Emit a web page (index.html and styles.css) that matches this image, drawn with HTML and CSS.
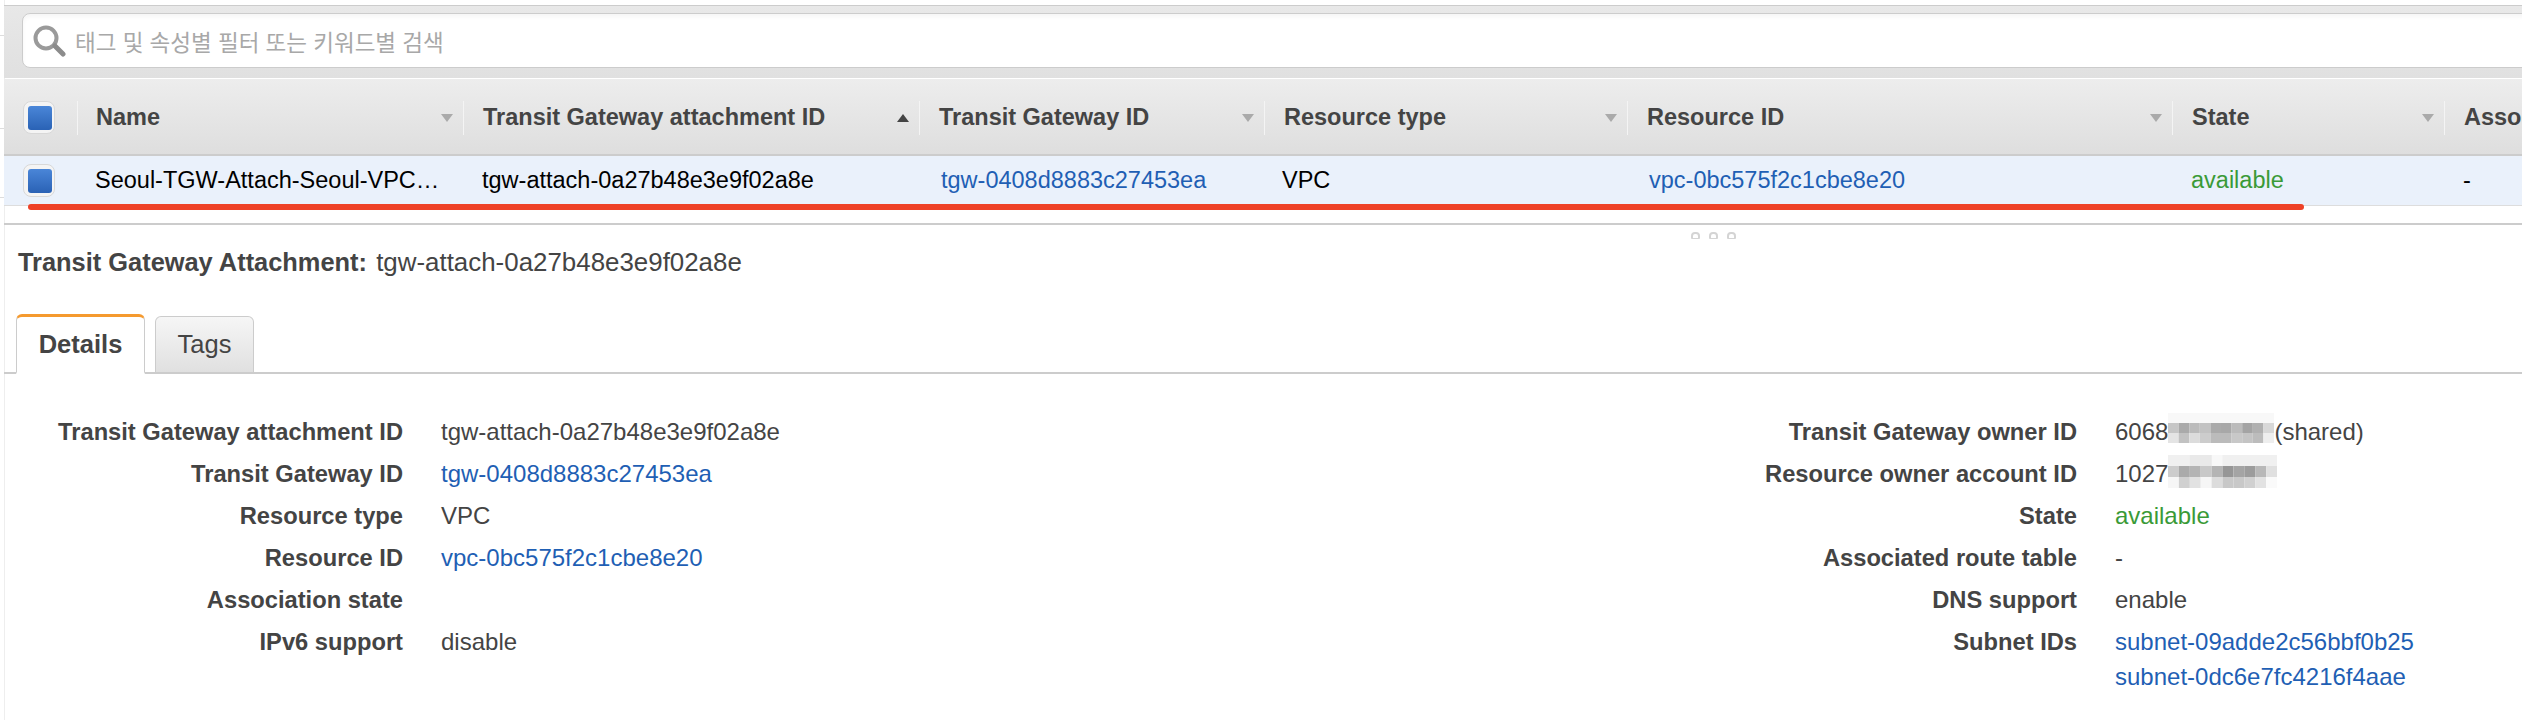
FILE: index.html
```html
<!DOCTYPE html>
<html>
	<head>
		<meta charset="UTF-8">
		<title>Transit Gateway Attachments</title>
		<link rel="stylesheet" href="styles.css">
	</head>
	<body>
		<div class="page">
			<div class="toolbar">
				<div class="search">
					<svg class="search-icon" width="34" height="32" viewBox="0 0 34 32">
						<circle cx="13" cy="13" r="10.5" fill="none" stroke="#9a9a9a" stroke-width="4"/>
						<path d="M22 21 L30 29" stroke="#8c8c8c" stroke-width="5" stroke-linecap="round"/>
					</svg>
					<span class="placeholder">태그 및 속성별 필터 또는 키워드별 검색</span>
				</div>
			</div>
			<div class="grid head">
				<div class="th check-cell"><span class="check"></span></div>
				<div class="th"><span>Name</span><i class="arrow"></i></div>
				<div class="th"><span>Transit Gateway attachment ID</span><i class="arrow up"></i></div>
				<div class="th"><span>Transit Gateway ID</span><i class="arrow"></i></div>
				<div class="th"><span>Resource type</span><i class="arrow"></i></div>
				<div class="th"><span>Resource ID</span><i class="arrow"></i></div>
				<div class="th"><span>State</span><i class="arrow"></i></div>
				<div class="th"><span>Association state</span></div>
			</div>
			<div class="grid row">
				<div class="td check-cell"><span class="check"></span></div>
				<div class="td">Seoul-TGW-Attach-Seoul-VPC…</div>
				<div class="td wide">tgw-attach-0a27b48e3e9f02a8e</div>
				<div class="td"><a>tgw-0408d8883c27453ea</a></div>
				<div class="td">VPC</div>
				<div class="td"><a>vpc-0bc575f2c1cbe8e20</a></div>
				<div class="td wide"><span class="ok">available</span></div>
				<div class="td wide">-</div>
			</div>
			<div class="marker"></div>
			<div class="splitter"><i></i><i></i><i></i></div>
			<h2 class="title"><b>Transit Gateway Attachment:</b> tgw-attach-0a27b48e3e9f02a8e</h2>
			<div class="tabs">
				<div class="tab active">Details</div>
				<div class="tab">Tags</div>
			</div>
			<div class="details">
				<dl class="props left">
					<dt>Transit Gateway attachment ID</dt><dd>tgw-attach-0a27b48e3e9f02a8e</dd>
					<dt>Transit Gateway ID</dt><dd><a>tgw-0408d8883c27453ea</a></dd>
					<dt>Resource type</dt><dd>VPC</dd>
					<dt>Resource ID</dt><dd><a>vpc-0bc575f2c1cbe8e20</a></dd>
					<dt>Association state</dt><dd></dd>
					<dt>IPv6 support</dt><dd>disable</dd>
				</dl>
				<dl class="props right">
					<dt>Transit Gateway owner ID</dt>
					<dd class="masked">6068<svg class="mosaic first" width="106" height="30" viewBox="0 0 100 30" preserveAspectRatio="none">
						<rect x="0" y="0" width="100" height="10" fill="#f8f8f8"/>
						<rect x="0" y="10" width="10" height="10" fill="#c6c6c6"/>
						<rect x="10" y="10" width="10" height="10" fill="#aaaaaa"/>
						<rect x="20" y="10" width="10" height="10" fill="#bbbbbb"/>
						<rect x="30" y="10" width="10" height="10" fill="#c2c2c2"/>
						<rect x="40" y="10" width="10" height="10" fill="#aaaaaa"/>
						<rect x="50" y="10" width="10" height="10" fill="#a8a8a8"/>
						<rect x="60" y="10" width="10" height="10" fill="#bbbbbb"/>
						<rect x="70" y="10" width="10" height="10" fill="#a4a4a4"/>
						<rect x="80" y="10" width="10" height="10" fill="#b0b0b0"/>
						<rect x="90" y="10" width="10" height="10" fill="#d8d8d8"/>
						<rect x="0" y="20" width="10" height="10" fill="#e4e4e4"/>
						<rect x="10" y="20" width="10" height="10" fill="#c2c2c2"/>
						<rect x="20" y="20" width="10" height="10" fill="#dcdcdc"/>
						<rect x="30" y="20" width="10" height="10" fill="#cccccc"/>
						<rect x="40" y="20" width="10" height="10" fill="#bbbbbb"/>
						<rect x="50" y="20" width="10" height="10" fill="#bbbbbb"/>
						<rect x="60" y="20" width="10" height="10" fill="#c8c8c8"/>
						<rect x="70" y="20" width="10" height="10" fill="#c4c4c4"/>
						<rect x="80" y="20" width="10" height="10" fill="#bcbcbc"/>
						<rect x="90" y="20" width="10" height="10" fill="#eeeeee"/>
					</svg>(shared)</dd>
					<dt>Resource owner account ID</dt>
					<dd class="masked">1027<svg class="mosaic second" width="109" height="33" viewBox="0 0 100 30" preserveAspectRatio="none">
						<rect x="0" y="0" width="100" height="10" fill="#f0f0f0"/>
						<rect x="40" y="0" width="10" height="10" fill="#f8f8f8"/>
						<rect x="20" y="0" width="20" height="10" fill="#e9e9e9"/>
						<rect x="0" y="10" width="10" height="10" fill="#cccccc"/>
						<rect x="10" y="10" width="10" height="10" fill="#aaaaaa"/>
						<rect x="20" y="10" width="10" height="10" fill="#b4b4b4"/>
						<rect x="30" y="10" width="10" height="10" fill="#c8c8c8"/>
						<rect x="40" y="10" width="10" height="10" fill="#b4b4b4"/>
						<rect x="50" y="10" width="10" height="10" fill="#969696"/>
						<rect x="60" y="10" width="10" height="10" fill="#a4a4a4"/>
						<rect x="70" y="10" width="10" height="10" fill="#9c9c9c"/>
						<rect x="80" y="10" width="10" height="10" fill="#b8b8b8"/>
						<rect x="90" y="10" width="10" height="10" fill="#e0e0e0"/>
						<rect x="0" y="20" width="10" height="10" fill="#f6f6f6"/>
						<rect x="10" y="20" width="10" height="10" fill="#d0d0d0"/>
						<rect x="20" y="20" width="10" height="10" fill="#e2e2e2"/>
						<rect x="30" y="20" width="10" height="10" fill="#f6f6f6"/>
						<rect x="40" y="20" width="10" height="10" fill="#dcdcdc"/>
						<rect x="50" y="20" width="10" height="10" fill="#c8c8c8"/>
						<rect x="60" y="20" width="10" height="10" fill="#c8c8c8"/>
						<rect x="70" y="20" width="10" height="10" fill="#d0d0d0"/>
						<rect x="80" y="20" width="10" height="10" fill="#e2e2e2"/>
						<rect x="90" y="20" width="10" height="10" fill="#fafafa"/>
					</svg></dd>
					<dt>State</dt><dd><span class="ok">available</span></dd>
					<dt>Associated route table</dt><dd>-</dd>
					<dt>DNS support</dt><dd>enable</dd>
					<dt>Subnet IDs</dt>
					<dd><a>subnet-09adde2c56bbf0b25</a><a class="next">subnet-0dc6e7fc4216f4aae</a></dd>
				</dl>
			</div>
		</div>
	</body>
</html>
```

FILE: styles.css
```css
*, *:before, *:after {
	box-sizing: border-box;
}
html {
	font-family: "Liberation Sans", "Noto Sans CJK KR", sans-serif;
	font-size: 23.5px;
}
body {
	margin: 0;
	padding-left: 4px;
	color: #444;
	overflow: hidden;
	background:
		linear-gradient(#ddd, #ddd) 0 35px / 4px 1px no-repeat,
		linear-gradient(#ddd, #ddd) 0 128px / 4px 1px no-repeat,
		linear-gradient(#ddd, #ddd) 0 197px / 4px 1px no-repeat,
		#fff;
}
.page {
	width: 2518px;
	height: 720px;
	padding-top: 5px;
	overflow: hidden;
	background: linear-gradient(#eee, #eee) 0 0 / 1px 100% no-repeat;
}
a {
	color: #1f5fb4;
}
.ok {
	color: #3a9a37;
}

/* filter bar */
.toolbar {
	height: 73px;
	padding: 7px 0 0 18px;
	margin-bottom: 1px;
	border-top: 1px solid #ccc;
	background: linear-gradient(#e8e8e8, #e0e0e0);
}
.search {
	display: flex;
	align-items: center;
	height: 55px;
	margin-right: -20px;
	padding-left: 10px;
	background: #fff;
	border: 1px solid #ccc;
	border-radius: 8px;
	box-shadow: inset 0 3px 4px rgba(0,0,0,.04);
}
.search-icon {
	flex: none;
	filter: blur(.7px);
	margin-right: 8px;
}
.placeholder {
	color: #a8a8a8;
	font-size: 22.5px;
}

/* table */
.grid {
	display: grid;
	grid-template-columns: 73px 386px 456px 345px 363px 545px 272px 300px;
	align-items: center;
}
.head {
	height: 77px;
	padding-top: 2px;
	border-bottom: 2px solid #ccc;
	background: linear-gradient(#ededed, #dedede);
	font-weight: 700;
}
.th {
	display: flex;
	align-items: center;
	justify-content: space-between;
	height: 34px;
	padding: 0 10px 0 19px;
	border-left: 1px solid #f4f4f4;
	white-space: nowrap;
	overflow: hidden;
}
.th:nth-child(2) {
	padding-left: 18px;
}
.check-cell,
.th.check-cell,
.td.check-cell {
	border-left: 0;
	padding: 0 0 0 19px;
}
.check {
	display: block;
	width: 32px;
	height: 33px;
	padding: 4px;
	background: #f4f4f4;
	border: 1px solid #d8d8d8;
	border-radius: 8px;
}
.check:before {
	content: "";
	display: block;
	width: 24px;
	height: 24px;
	border-radius: 3px;
	background: linear-gradient(#4a86d8, #2a62b5);
}
.arrow {
	width: 0;
	height: 0;
	border-left: 6px solid transparent;
	border-right: 6px solid transparent;
	border-top: 8px solid #aaa;
}
.arrow.up {
	border-top: 0;
	border-bottom: 8px solid #444;
}
.row {
	height: 50px;
	background: #eaf1fb;
	border-bottom: 1px solid #ddd;
	color: #000;
}
.td {
	padding-left: 18px;
	white-space: nowrap;
}
.td.wide {
	padding-left: 19px;
}
.td a {
	margin-left: 4px;
}
.marker {
	width: 2276px;
	height: 6px;
	margin: -2px 0 0 24px;
	background: #ee4127;
	border-radius: 3px;
}
.splitter {
	display: flex;
	gap: 9px;
	height: 23px;
	margin-top: 13px;
	padding: 7px 0 0 1687px;
	border-top: 2px solid #ccc;
}
.splitter i {
	width: 9px;
	height: 7px;
	background: #fff;
	border: 2px solid #d4d4d4;
	border-bottom-width: 1px;
	border-radius: 4px 4px 1px 1px;
}

.title {
	margin: 0;
	padding: 3px 0 0 14px;
	height: 66px;
	font-size: 25.9px;
	line-height: 26px;
	font-weight: 400;
}
.title b {
	font-size: 25.4px;
	margin-right: 2px;
}

/* tabs */
.tabs {
	display: flex;
	align-items: flex-end;
	gap: 10px;
	height: 62px;
	padding-left: 12px;
	border-bottom: 2px solid #ccc;
	font-size: 25.5px;
}
.tab {
	display: flex;
	align-items: center;
	justify-content: center;
	width: 99px;
	height: 58px;
	margin-bottom: -2px;
	border: 1px solid #ccc;
	border-bottom: 2px solid #ccc;
	border-radius: 6px 6px 0 0;
	background: linear-gradient(#f6f6f6, #e0e0e0);
}
.tab.active {
	width: 129px;
	height: 60px;
	background: #fff;
	border-top: 3px solid #f59a2f;
	border-bottom-color: #fff;
	font-weight: 700;
}

/* details */
.details {
	display: flex;
	align-items: flex-start;
	padding-top: 37px;
	font-size: 24px;
}
.props {
	display: grid;
	grid-auto-rows: minmax(42px, auto);
	column-gap: 38px;
	margin: 0;
}
.props dt {
	text-align: right;
	font-size: 23.7px;
	font-weight: 700;
	line-height: 42px;
}
.props dd {
	margin: 0;
	line-height: 42px;
}
.props a {
	display: block;
}
.props a.next {
	margin-top: -7px;
}
.props dd.masked {
	height: 42px;
}
.left {
	grid-template-columns: 399px 999px;
}
.right {
	grid-template-columns: 637px 400px;
}
.mosaic {
	vertical-align: middle;
}
.mosaic.first {
	margin-bottom: 12px;
}
.mosaic.second {
	margin-bottom: 9px;
}
```
